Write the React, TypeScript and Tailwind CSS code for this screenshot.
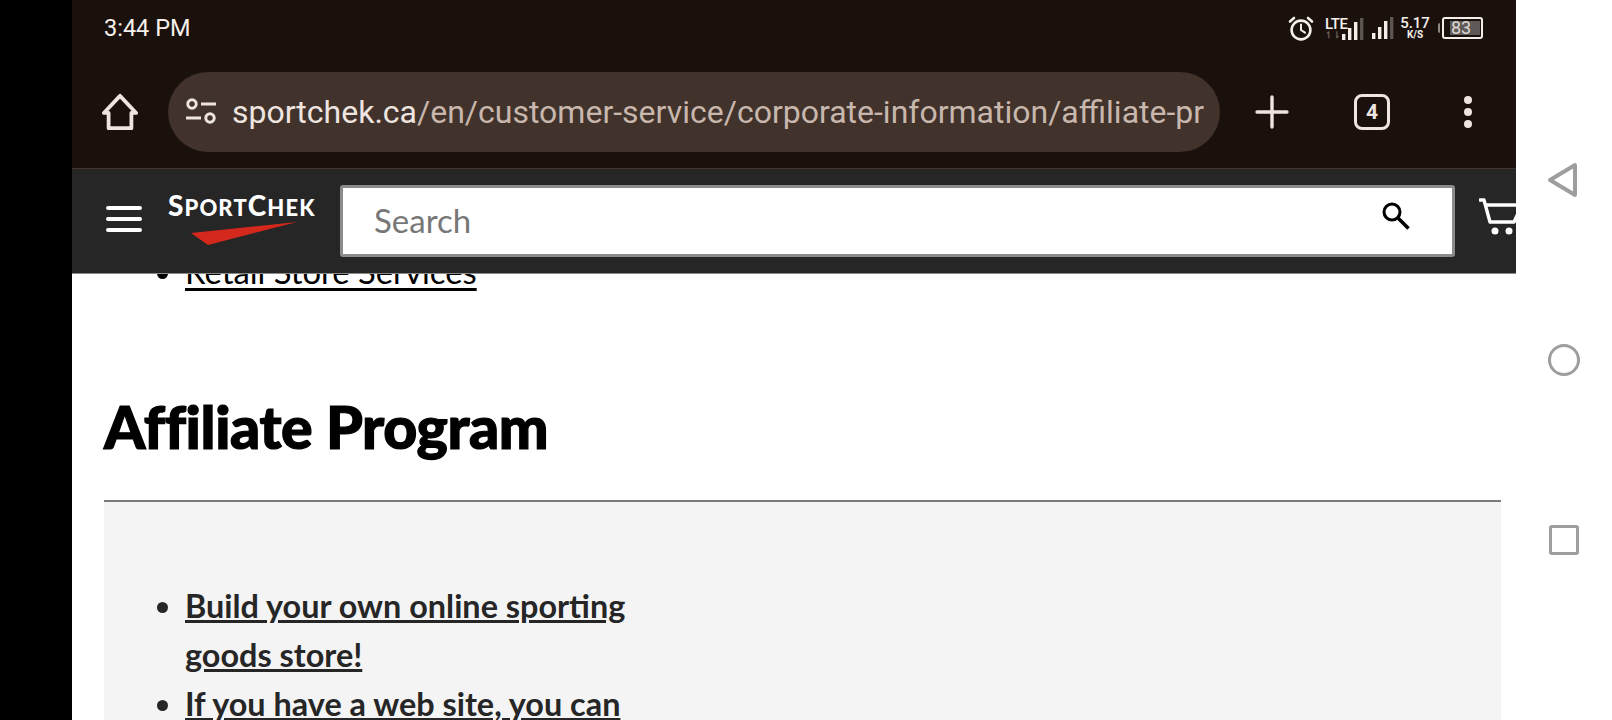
import React from "react"

function AlarmIcon() {
  return (
    <svg width="26" height="26" viewBox="0 0 26 26" fill="none" stroke="#f4eeea" strokeWidth="2.6" strokeLinecap="round">
      <circle cx="13" cy="15" r="9.4" />
      <path d="M13 9.5V15l4 2.6" strokeWidth="2" />
      <path d="M2 6.5 6 3M24 6.5 20 3" />
    </svg>
  )
}

function SignalBars() {
  return (
    <svg width="22" height="22" viewBox="0 0 22 22" fill="#f4eeea">
      <rect x="0" y="16" width="3.4" height="6" />
      <rect x="6" y="10" width="3.4" height="12" />
      <rect x="12" y="4" width="3.4" height="18" />
      <rect x="18" y="0" width="3.4" height="22" fill="#5c5450" />
    </svg>
  )
}

function StatusBar() {
  return (
    <div className="flex h-[56px] items-center justify-between pl-[32px] pr-[33px] text-[#f6f0ec]">
      <span className="mt-[2px] text-[23.5px] leading-none [font-family:Roboto,sans-serif]">3:44 PM</span>
      <div className="flex items-center [font-family:Roboto,sans-serif]">
        <AlarmIcon />
        <div className="relative ml-[11px] mr-[9px] h-[24px] w-[38px]">
          <span className="absolute left-0 top-[1px] text-[15px] font-medium leading-none tracking-[-0.5px]">LTE</span>
          <span className="absolute left-0 top-[15px] text-[9px] font-bold leading-none text-[#6a625d]">↿⇂</span>
          <div className="absolute -right-[1px] top-[2px]">
            <SignalBars />
          </div>
        </div>
        <div className="mr-[7px]">
          <SignalBars />
        </div>
        <div className="mr-[9px] flex w-[28px] flex-col items-center">
          <span className="text-[15px] font-medium leading-[13px]">5.17</span>
          <span className="text-[10px] font-bold leading-[10px]">K/S</span>
        </div>
        <div className="flex items-center">
          <div className="mr-[2px] h-[10px] w-[2px] rounded-l bg-[#8f8984]" />
          <div className="flex h-[22px] w-[41px] items-center rounded-[3px] border-2 border-[#f4eeea] pl-[6px] pr-[1px]">
            <span className="flex h-[14px] w-full items-center bg-[#5f5a57] pl-[1px] text-[18px] leading-none text-[#ddd8d4]">83</span>
          </div>
        </div>
      </div>
    </div>
  )
}

function BrowserToolbar() {
  return (
    <div className="flex h-[112px] items-start pl-[30px] pt-[16px]">
      <svg width="38" height="40" viewBox="0 0 40 40" fill="none" stroke="#efe5e0" strokeWidth="4" strokeLinejoin="round" className="mt-[20px] -ml-[1px] mr-[3px]">
        <path d="M20 3 3 21h5v16h24V21h5z" />
      </svg>
      <div className="ml-[26px] flex h-[80px] w-[1052px] items-center overflow-hidden rounded-full bg-[#41322b] pl-[17px] pr-[16px]">
        <svg width="32" height="28" viewBox="0 0 32 28" fill="none" stroke="#efe5e0" strokeWidth="3" className="shrink-0">
          <circle cx="7" cy="6" r="4.2" />
          <path d="M16 6h15M1 20h15" />
          <circle cx="25" cy="20" r="4.2" />
        </svg>
        <div className="ml-[15px] overflow-hidden whitespace-nowrap text-[32px] leading-[40px] text-[#c8b7ad] [font-family:Roboto,sans-serif]">
          <span className="text-[#efe5e0]">sportchek.ca</span>/en/customer-service/corporate-information/affiliate-pr
        </div>
      </div>
      <svg width="34" height="34" viewBox="0 0 34 34" fill="none" stroke="#efe5e0" strokeWidth="3.4" strokeLinecap="round" className="ml-[35px] mt-[23px]">
        <path d="M17 2v30M2 17h30" />
      </svg>
      <div className="ml-[65px] mt-[22px] flex h-[36px] w-[36px] items-center justify-center rounded-[8px] border-[3.5px] border-[#efe5e0] text-[21px] font-bold leading-none text-[#efe5e0] [font-family:Roboto,sans-serif]">
        4
      </div>
      <div className="ml-[74px] mt-[24px] flex flex-col gap-[4px]">
        <span className="h-[8px] w-[8px] rounded-full bg-[#efe5e0]" />
        <span className="h-[8px] w-[8px] rounded-full bg-[#efe5e0]" />
        <span className="h-[8px] w-[8px] rounded-full bg-[#efe5e0]" />
      </div>
    </div>
  )
}

function SiteHeader() {
  return (
    <div className="relative z-10 flex h-[106px] shrink-0 items-start overflow-hidden border-y border-t-[#42352e] border-b-[#8a8a8a] bg-[#262626] pl-[34px]">
      <div className="mt-[37px] flex w-[36px] shrink-0 flex-col gap-[7px]">
        <span className="h-[4px] rounded-full bg-white" />
        <span className="h-[4px] rounded-full bg-white" />
        <span className="h-[4px] rounded-full bg-white" />
      </div>
      <div className="ml-[26px] mt-[24px] w-[148px] shrink-0">
        <div className="whitespace-nowrap text-[22px] font-black leading-[24px] tracking-[1.1px] text-white [font-family:Lato,sans-serif]">
          <span className="text-[28px]">S</span>PORT<span className="text-[28px]">C</span>HEK
        </div>
        <svg width="148" height="24" viewBox="0 0 148 24" className="ml-[1px] mt-[2px] block">
          <path d="M22 11 128 0 39 23z" fill="#d5281c" />
        </svg>
      </div>
      <div className="ml-[24px] mt-[16px] flex h-[72px] w-[1115px] shrink-0 items-center rounded-[3px] border-[3px] border-[#8c8c8c] bg-white pl-[31px]">
        <span className="-mt-[2px] text-[33px] leading-none text-[#777777] [font-family:Lato,sans-serif]">Search</span>
        <svg width="30" height="30" viewBox="0 0 30 30" fill="none" stroke="#000" className="ml-auto mr-[41px] -translate-y-[5px]">
          <circle cx="11" cy="11" r="8" strokeWidth="3" />
          <path d="m17 17 10.500 10.500" strokeWidth="3.500" />
        </svg>
      </div>
      <svg width="50" height="40" viewBox="0 0 50 40" fill="none" className="ml-[24px] mt-[29px] shrink-0">
        <path d="M1 2h4l6 22h24l8-17H8" stroke="#fff" strokeWidth="3.400" strokeLinecap="round" strokeLinejoin="round" />
        <circle cx="16" cy="33" r="3.500" fill="#fff" />
        <circle cx="30" cy="33" r="3.500" fill="#fff" />
      </svg>
    </div>
  )
}

function PageContent() {
  return (
    <div className="flex-1 overflow-hidden bg-white pl-[32px] pr-[15px] [font-family:Lato,sans-serif]">
      <ul className="-mt-[27px] list-disc pl-[81px] text-[32.8px] leading-[49px] text-black">
        <li className="underline decoration-[3px] underline-offset-[4px]">Retail Store Services</li>
      </ul>
      <h1 className="mt-[97px] text-[59px] font-black leading-[68px] tracking-[-0.4px] text-black [-webkit-text-stroke:1.2px_#000]">Affiliate Program</h1>
      <div className="mt-[39px] h-[400px] border-t-2 border-[#7a7a7a] bg-[#f4f4f4] pl-[81px] pt-[79px]">
        <ul className="w-[480px] list-disc text-[32.4px] font-bold leading-[49px] text-[#262626]">
          <li className="underline decoration-[3px] underline-offset-[2px]">Build your own online sporting goods store!</li>
          <li className="underline decoration-[3px] underline-offset-[2px]">If you have a web site, you can</li>
        </ul>
      </div>
    </div>
  )
}

function AndroidNav() {
  return (
    <div className="flex w-[96px] shrink-0 flex-col items-center justify-center bg-white">
      <div className="flex h-[180px] items-center pr-[3px]">
        <svg width="32" height="36" viewBox="0 0 32 36" fill="none" stroke="#9e9e9e" strokeWidth="4" strokeLinejoin="round">
          <path d="M28 3v30L3 18z" />
        </svg>
      </div>
      <div className="flex h-[180px] items-center">
        <span className="h-[32px] w-[32px] rounded-full border-[3.5px] border-[#9e9e9e]" />
      </div>
      <div className="flex h-[180px] items-center">
        <span className="h-[30px] w-[30px] rounded-[3px] border-[3.5px] border-[#9e9e9e]" />
      </div>
    </div>
  )
}

export default function App() {
  return (
    <div className="flex h-[720px] w-[1612px] overflow-hidden bg-black">
      <div className="w-[72px] shrink-0 bg-black" />
      <div className="flex w-[1444px] shrink-0 flex-col">
        <div className="shrink-0 bg-[#1a110c]">
          <StatusBar />
          <BrowserToolbar />
        </div>
        <SiteHeader />
        <PageContent />
      </div>
      <AndroidNav />
    </div>
  )
}
